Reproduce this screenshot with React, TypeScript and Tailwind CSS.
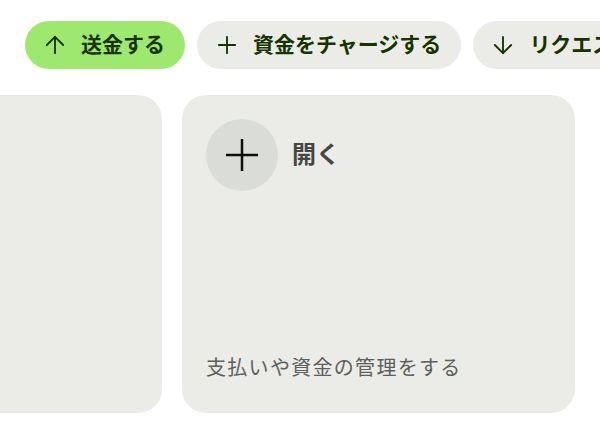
import { ArrowDown, ArrowUp, Plus } from "lucide-react";

const font = { fontFamily: 'Inter, "Noto Sans CJK JP", sans-serif' };

function ActionButton({ icon, label, primary }: { icon: React.ReactNode; label: string; primary?: boolean }) {
    return (
        <button
            className={`flex h-12 shrink-0 items-center gap-3 rounded-full pl-4 pr-5 text-[21px] font-bold text-[#163300] ${
                primary ? "bg-[#9fe870]" : "bg-[#ebece8]"
            }`}
        >
            {icon}
            <span>{label}</span>
        </button>
    );
}

export default function App() {
    return (
        <div className="h-[442px] w-[600px] overflow-hidden bg-white" style={font}>
            <div className="flex gap-3 whitespace-nowrap pl-[25px] pt-[21px]">
                <ActionButton primary icon={<ArrowUp size={28} strokeWidth={1.6} />} label="送金する" />
                <ActionButton icon={<Plus size={28} strokeWidth={1.6} />} label="資金をチャージする" />
                <ActionButton icon={<ArrowDown size={28} strokeWidth={1.6} />} label="リクエスト" />
            </div>

            <div className="-ml-[231px] mt-[26px] flex gap-5">
                <div className="h-[318px] w-[393px] shrink-0 rounded-[24px] bg-[#ebece8]" />

                <div className="flex h-[318px] w-[393px] shrink-0 flex-col justify-between rounded-[24px] bg-[#ebece8] px-6 pb-[30px] pt-6">
                    <div className="flex items-center gap-[14px]">
                        <div className="flex h-[72px] w-[72px] items-center justify-center rounded-full bg-[#dadcd7]">
                            <svg width="34" height="34" viewBox="0 0 34 34" fill="none" stroke="#0e0f0c" strokeWidth="2.5" strokeLinecap="butt">
                                <line x1="17" y1="1" x2="17" y2="33" />
                                <line x1="1" y1="17" x2="33" y2="17" />
                            </svg>
                        </div>
                        <span className="text-[24px] font-semibold text-[#454745]">開く</span>
                    </div>
                    <p className="text-[20px] leading-[1.5] tracking-[1.3px] text-[#5d605b]">支払いや資金の管理をする</p>
                </div>
            </div>
        </div>
    );
}
